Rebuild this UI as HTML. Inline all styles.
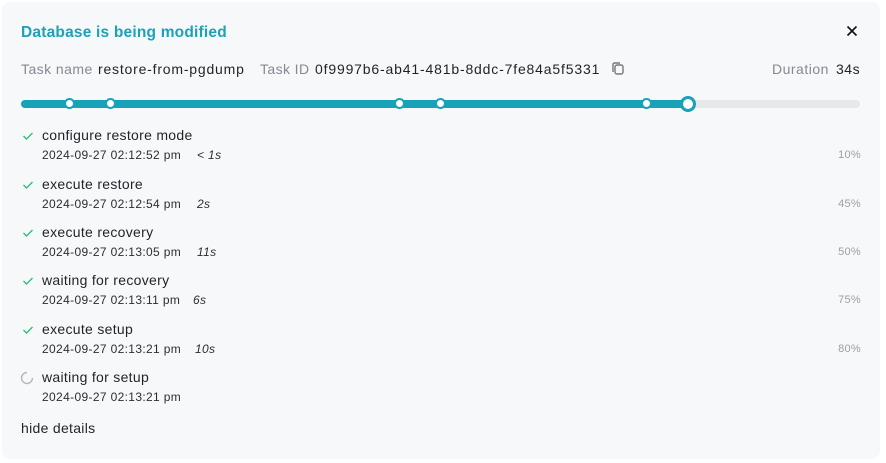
<!DOCTYPE html>
<html><head><style>
body{margin:0;background:#fff;width:886px;height:463px;overflow:hidden;font-family:"Liberation Sans",sans-serif;}
.p{position:absolute;left:2px;top:2px;width:878px;height:457px;background:#f7f8fa;border-radius:8px;}
.a{position:absolute;white-space:nowrap;}
.t{font-size:14px;color:#1f2328;letter-spacing:0.3px;}
.g{color:#828a93;}
.d{font-size:12px;color:#2a2e33;letter-spacing:0.35px;}
.pc{font-size:11px;color:#9aa0a6;right:25px;position:absolute;letter-spacing:0.3px;}
.dot{position:absolute;width:6px;height:6px;border:2.5px solid #17a2b8;background:#fff;border-radius:50%;}
i{position:absolute;}
</style></head><body>
<div class="p"></div>
<div class="a" style="left:21px;top:24px;font-size:15.5px;font-weight:bold;color:#1aa2b8;letter-spacing:0.2px">Database is being modified</div>
<svg class="a" style="left:846px;top:25px" width="12" height="12" viewBox="0 0 12 12"><path d="M1.5 1.5L10.5 10.5M10.5 1.5L1.5 10.5" stroke="#111" stroke-width="1.6"/></svg>
<div class="a t g" style="left:21px;top:61px;letter-spacing:0.45px">Task name</div>
<div class="a t" style="left:98px;top:61px;letter-spacing:0.8px">restore-from-pgdump</div>
<div class="a t g" style="left:260px;top:61px;letter-spacing:0.4px">Task ID</div>
<div class="a t" style="left:315px;top:61px;letter-spacing:0.83px">0f9997b6-ab41-481b-8ddc-7fe84a5f5331</div>
<svg class="a" style="left:611px;top:61px" width="15" height="16" viewBox="0 0 15 16"><rect x="4" y="4" width="8" height="9" rx="2" fill="none" stroke="#777" stroke-width="1.4"/><path d="M2 11V3.5A1.5 1.5 0 0 1 3.5 2H9" fill="none" stroke="#777" stroke-width="1.4"/></svg>
<div class="a t g" style="left:772px;top:61px;letter-spacing:0.5px">Duration</div>
<div class="a t" style="left:836px;top:61px;letter-spacing:0.5px">34s</div>
<div class="a" style="left:21px;top:100px;width:839px;height:8px;border-radius:4px;background:#e6e8ec;"></div>
<div class="a" style="left:21px;top:100px;width:667px;height:8px;border-radius:4px;background:#17a2b8;"></div>
<div class="dot" style="left:64px;top:98px;width:7px;height:7px"></div>
<div class="dot" style="left:105px;top:98px;width:7px;height:7px"></div>
<div class="dot" style="left:394px;top:98px;width:7px;height:7px"></div>
<div class="dot" style="left:435px;top:98px;width:7px;height:7px"></div>
<div class="dot" style="left:641px;top:98px;width:7px;height:7px"></div>
<div class="dot" style="left:680px;top:96px;width:10px;height:10px;border-width:3px"></div>

<div style="position:absolute;left:0;top:126px;width:886px">
<svg class="a" style="left:22px;top:5px" width="12" height="10"><path d="M1.5 5l3 3 6-6" fill="none" stroke="#2dbf7a" stroke-width="1.4"/></svg>
<div class="a t" style="left:42px;top:1px">configure restore mode</div>
<div class="a d" style="left:42px;top:22px">2024-09-27 02:12:52 pm<i style="left:155px">&lt; 1s</i></div>
<div class="pc" style="top:23px">10%</div>
</div>
<div style="position:absolute;left:0;top:175px;width:886px">
<svg class="a" style="left:22px;top:5px" width="12" height="10"><path d="M1.5 5l3 3 6-6" fill="none" stroke="#2dbf7a" stroke-width="1.4"/></svg>
<div class="a t" style="left:42px;top:1px">execute restore</div>
<div class="a d" style="left:42px;top:22px">2024-09-27 02:12:54 pm<i style="left:155px">2s</i></div>
<div class="pc" style="top:23px">45%</div>
</div>
<div style="position:absolute;left:0;top:223px;width:886px">
<svg class="a" style="left:22px;top:5px" width="12" height="10"><path d="M1.5 5l3 3 6-6" fill="none" stroke="#2dbf7a" stroke-width="1.4"/></svg>
<div class="a t" style="left:42px;top:1px">execute recovery</div>
<div class="a d" style="left:42px;top:22px">2024-09-27 02:13:05 pm<i style="left:155px">11s</i></div>
<div class="pc" style="top:23px">50%</div>
</div>
<div style="position:absolute;left:0;top:271px;width:886px">
<svg class="a" style="left:22px;top:5px" width="12" height="10"><path d="M1.5 5l3 3 6-6" fill="none" stroke="#2dbf7a" stroke-width="1.4"/></svg>
<div class="a t" style="left:42px;top:1px">waiting for recovery</div>
<div class="a d" style="left:42px;top:22px">2024-09-27 02:13:11 pm<i style="left:151px">6s</i></div>
<div class="pc" style="top:23px">75%</div>
</div>
<div style="position:absolute;left:0;top:320px;width:886px">
<svg class="a" style="left:22px;top:5px" width="12" height="10"><path d="M1.5 5l3 3 6-6" fill="none" stroke="#2dbf7a" stroke-width="1.4"/></svg>
<div class="a t" style="left:42px;top:1px">execute setup</div>
<div class="a d" style="left:42px;top:22px">2024-09-27 02:13:21 pm<i style="left:153px">10s</i></div>
<div class="pc" style="top:23px">80%</div>
</div>
<div style="position:absolute;left:0;top:368px;width:886px">
<svg class="a" style="left:20px;top:3px" width="14" height="14" viewBox="0 0 14 14"><path d="M7 1.5A5.5 5.5 0 1 0 12.5 7" fill="none" stroke="#b5b9bf" stroke-width="1.5"/></svg>
<div class="a t" style="left:42px;top:1px">waiting for setup</div>
<div class="a d" style="left:42px;top:22px">2024-09-27 02:13:21 pm</div>
</div>
<div class="a t" style="left:21px;top:420px">hide details</div>
</body></html>
